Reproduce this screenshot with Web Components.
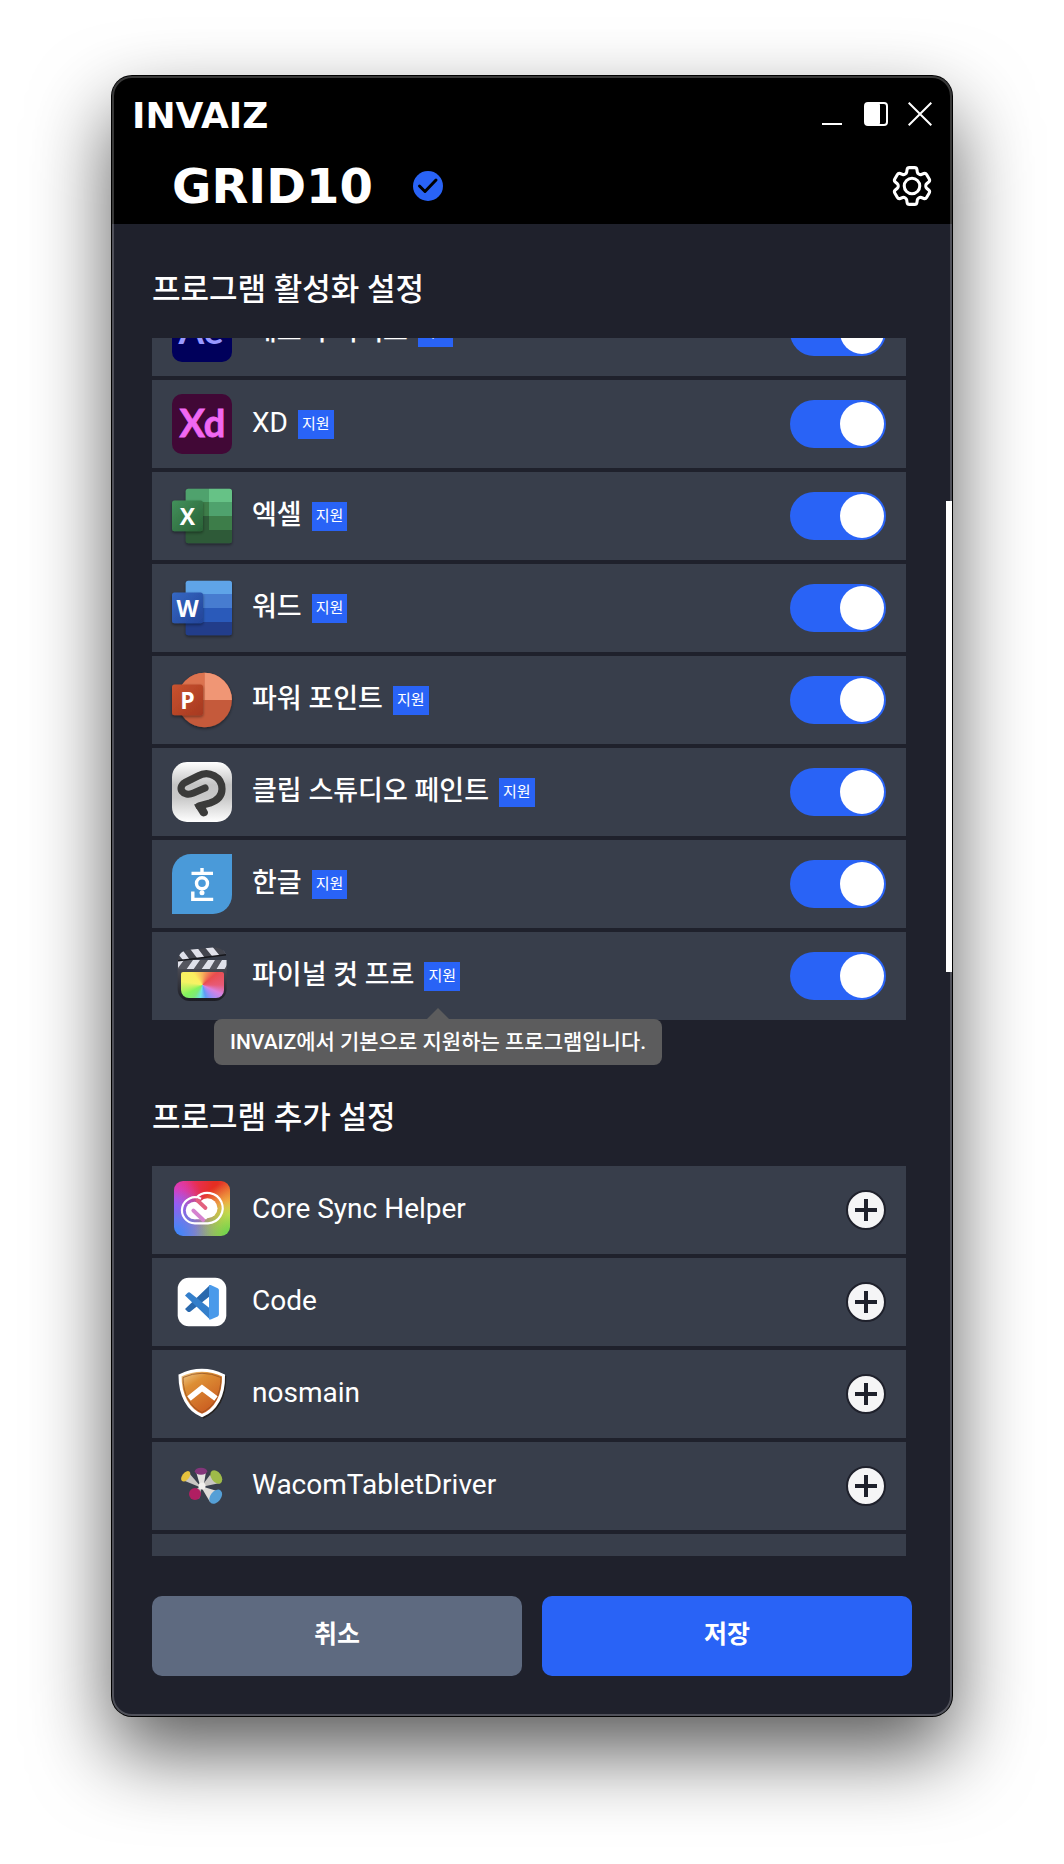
<!DOCTYPE html>
<html lang="ko">
<head>
<meta charset="utf-8">
<meta name="viewport" content="width=device-width, initial-scale=1">
<title>INVAIZ GRID10</title>
<style>
  body {
    margin: 0;
    background: #fff;
    color: #fff;
    font-family: Roboto, "Noto Sans CJK KR", sans-serif;
  }
</style>
</head>
<body>
<app-window>
  <window-header slot="header" brand="INVAIZ" device="GRID10"></window-header>

  <program-section heading="프로그램 활성화 설정" class="active">
    <program-row icon="ae" kind="toggle">애프터 이펙트</program-row>
    <program-row icon="xd" kind="toggle">XD</program-row>
    <program-row icon="excel" kind="toggle">엑셀</program-row>
    <program-row icon="word" kind="toggle">워드</program-row>
    <program-row icon="powerpoint" kind="toggle">파워 포인트</program-row>
    <program-row icon="clip" kind="toggle">클립 스튜디오 페인트</program-row>
    <program-row icon="hangul" kind="toggle">한글</program-row>
    <program-row icon="finalcut" kind="toggle">파이널 컷 프로</program-row>
    <hint-bubble slot="hint">INVAIZ에서 기본으로 지원하는 프로그램입니다.</hint-bubble>
  </program-section>

  <program-section heading="프로그램 추가 설정" class="extra">
    <program-row icon="cc" kind="add">Core Sync Helper</program-row>
    <program-row icon="code" kind="add">Code</program-row>
    <program-row icon="shield" kind="add">nosmain</program-row>
    <program-row icon="wacom" kind="add">WacomTabletDriver</program-row>
    <program-row kind="blank"></program-row>
  </program-section>

  <action-button slot="footer">취소</action-button>
  <action-button slot="footer" primary>저장</action-button>
</app-window>

<script>
const define = (name, html, setup) => {
  const template = document.createElement('template');
  template.innerHTML = html;
  customElements.define(name, class extends HTMLElement {
    constructor() {
      super();
      this.attachShadow({ mode: 'open' }).append(template.content.cloneNode(true));
    }
    connectedCallback() {
      if (setup) setup(this, this.shadowRoot);
    }
  });
};

/* Window frame */
define('app-window', `
<style>
  :host {
    display: block;
    position: relative;
    margin: 76px 112px 148px;
    border-radius: 20px;
    background: #1f212c;
    box-shadow: 0 0 0 1px #000, 0 36px 80px rgba(0, 0, 0, .65);
  }
  :host::after {
    content: "";
    position: absolute;
    inset: 0;
    border-radius: 20px;
    box-shadow: inset 0 0 0 2px rgba(255, 255, 255, .22);
    pointer-events: none;
  }
  main { display: flex; flex-direction: column; gap: 72px; padding: 40px 46px 40px 40px; }
  footer { display: flex; gap: 20px; padding: 0 40px 40px; }
  .thumb {
    position: absolute;
    z-index: 1;
    right: 0;
    top: 425px;
    width: 6px;
    height: 471px;
    background: #fff;
  }
</style>
<slot name="header"></slot>
<main><slot></slot></main>
<footer><slot name="footer"></slot></footer>
<div class="thumb"></div>`);

/* Title bar and device bar */
define('window-header', `
<style>
  :host {
    display: block;
    padding-bottom: 4px;
    border-radius: 20px 20px 0 0;
    background: #000;
    font-family: "DejaVu Sans", sans-serif;
    font-weight: 700;
  }
  svg { display: block; }
  button { padding: 0; border: 0; background: none; color: #fff; }
  .bar { display: flex; align-items: center; justify-content: space-between; padding: 0 20px; }
  .title { height: 76px; }
  .device { height: 68px; padding-left: 60px; }
  .brand { padding-top: 4px; font-size: 36px; line-height: 40px; }
  .controls { display: flex; gap: 20px; }
  .name { display: flex; align-items: center; gap: 29px; }
  h1 { margin: 0; min-width: 212px; font-size: 48px; line-height: 56px; }
</style>
<div class="bar title">
  <span class="brand"></span>
  <div class="controls">
    <button aria-label="최소화"><svg width="24" height="24"><rect x="2" y="21" width="20" height="2" fill="#fff"/></svg></button>
    <button aria-label="패널"><svg width="24" height="24"><rect x="1" y="1" width="22" height="22" rx="3" fill="none" stroke="#fff" stroke-width="2"/><rect x="1" y="1" width="15" height="22" rx="2" fill="#fff"/></svg></button>
    <button aria-label="닫기"><svg width="24" height="24"><path d="M.7.7l22.6 22.6M23.3.7L.7 23.3" stroke="#fff" stroke-width="2"/></svg></button>
  </div>
</div>
<div class="bar device">
  <div class="name">
    <h1></h1>
    <svg width="30" height="30"><circle cx="15" cy="15" r="15" fill="#2963f6"/><path d="M6.500 15l5.500 5.500L23 9" fill="none" stroke="#000" stroke-width="3" stroke-linecap="round" stroke-linejoin="round"/></svg>
  </div>
  <button aria-label="설정"><svg width="40" height="40" viewBox="2.2 2.200 19.600 19.600" fill="none" stroke="#fff" stroke-width="1.500" stroke-linejoin="round"><path d="M9.594 3.94c.09-.542.56-.94 1.11-.94h2.593c.55 0 1.02.398 1.11.94l.213 1.281c.063.374.313.686.645.87.074.04.147.083.22.127.325.196.72.257 1.075.124l1.217-.456a1.125 1.125 0 0 1 1.37.49l1.296 2.247a1.125 1.125 0 0 1-.26 1.431l-1.003.827c-.293.241-.438.613-.43.992a7.723 7.723 0 0 1 0 .255c-.008.378.137.75.43.991l1.004.827c.424.35.534.955.26 1.43l-1.298 2.247a1.125 1.125 0 0 1-1.369.491l-1.217-.456c-.355-.133-.75-.072-1.076.124a6.47 6.47 0 0 1-.22.128c-.331.183-.581.495-.644.869l-.213 1.281c-.09.543-.56.94-1.11.94h-2.594c-.55 0-1.019-.398-1.11-.94l-.213-1.281c-.062-.374-.312-.686-.644-.87a6.52 6.52 0 0 1-.22-.127c-.325-.196-.72-.257-1.076-.124l-1.217.456a1.125 1.125 0 0 1-1.369-.49l-1.297-2.247a1.125 1.125 0 0 1 .26-1.431l1.004-.827c.292-.24.437-.613.43-.991a6.932 6.932 0 0 1 0-.255c.007-.38-.138-.751-.43-.992l-1.004-.827a1.125 1.125 0 0 1-.26-1.43l1.297-2.247a1.125 1.125 0 0 1 1.37-.491l1.216.456c.356.133.751.072 1.076-.124.072-.044.146-.086.22-.128.332-.183.582-.495.644-.869l.214-1.28Z"/><circle cx="12" cy="12" r="3.800"/></svg></button>
</div>`, (host, root) => {
  root.querySelector('.brand').textContent = host.getAttribute('brand');
  root.querySelector('h1').textContent = host.getAttribute('device');
});

define('program-section', `
<style>
  :host { display: block; position: relative; }
  h2 { margin: 0 0 24px; padding-top: 2px; font-size: 31px; line-height: 48px; font-weight: 500; }
  .list { display: flex; flex-direction: column; gap: 4px; overflow: hidden; }
  :host(.active) .list { height: 682px; justify-content: flex-end; font-size: 27px; font-weight: 500; }
  :host(.active) .list ::slotted([icon="xd"]) { font-size: 28px; font-weight: 400; }
  :host(.extra) .list { height: 390px; font-size: 28px; }
  ::slotted(program-row) { flex: none; }
</style>
<h2></h2>
<div class="list"><slot></slot></div>
<slot name="hint"></slot>`, (host, root) => {
  root.querySelector('h2').textContent = host.getAttribute('heading');
});

/* One program */
define('program-row', `
<style>
  :host { display: flex; align-items: center; height: 88px; padding: 0 20px; box-sizing: border-box; background: #383e4b; }
  program-icon { margin-right: 20px; }
  label { flex: 1; display: flex; align-items: center; gap: 10px; }
  .text { line-height: 40px; padding-bottom: 2px; }
  .badge { padding: 0 4px; background: #2963f6; font-size: 15px; line-height: 29px; font-weight: 400; }
  input { appearance: none; display: flex; width: 96px; height: 48px; margin: 0; padding: 2px; box-sizing: border-box; border-radius: 24px; background: #5e6a80; }
  input::before { content: ""; width: 44px; height: 44px; border-radius: 50%; background: #fff; }
  input:checked { justify-content: flex-end; background: #2963f6; }
  button { padding: 0; border: 0; background: none; }
  svg { display: block; }
</style>
<program-icon></program-icon>
<label for="switch"><span class="text"><slot></slot></span><span class="badge">지원</span></label>
<input id="switch" type="checkbox" role="switch" checked>
<button aria-label="추가"><svg width="40" height="40"><circle cx="20" cy="20" r="19" fill="#f5f5f6" stroke="#1f212c" stroke-width="2"/><path d="M9 20h22M20 9v22" stroke="#1f212c" stroke-width="4"/></svg></button>`, (host, root) => {
  const kind = host.getAttribute('kind');
  root.querySelector('program-icon').setAttribute('name', host.getAttribute('icon') || '');
  if (kind === 'blank') root.querySelectorAll('label, input, button').forEach(node => node.remove());
  if (kind === 'add') {
    const text = root.querySelector('.text');
    text.style.flex = '1';
    root.querySelector('label').replaceWith(text);
    root.querySelector('input').remove();
  }
  if (kind === 'toggle') root.querySelector('button').remove();
});

/* Tooltip under the hovered badge */
define('hint-bubble', `
<style>
  :host {
    position: absolute;
    z-index: 1;
    left: 62px;
    bottom: -45px;
    padding: 0 16px;
    border-radius: 8px;
    background: #5c5c5d;
    font-size: 21px;
    line-height: 46px;
    font-weight: 500;
    white-space: nowrap;
  }
  :host::before {
    content: "";
    position: absolute;
    left: 50%;
    bottom: 100%;
    margin-left: -11px;
    border: 11px solid transparent;
    border-top: 0;
    border-bottom-color: #5c5c5d;
  }
</style>
<slot></slot>`, host => host.setAttribute('role', 'tooltip'));

define('action-button', `
<style>
  :host { display: block; flex: 1; }
  button {
    width: 100%;
    height: 80px;
    padding: 0 0 8px;
    border: 0;
    border-radius: 10px;
    background: #5e6a80;
    color: #fff;
    font: inherit;
    font-size: 25px;
    font-weight: 700;
  }
  :host([primary]) button { background: #2963f6; }
</style>
<button><slot></slot></button>`);

/* Program icons, drawn on a 60 x 60 grid */
const office = (id, dark, light, letter, back) => `
  <defs><linearGradient id="${id}" x2="1" y2="1"><stop stop-color="${light}"/><stop offset="1" stop-color="${dark}"/></linearGradient>
  <filter id="s" x="-30%" y="-30%" width="160%" height="160%"><feDropShadow dx="0" dy="1.500" stdDeviation="1.500" flood-opacity=".45"/></filter></defs>
  <g filter="url(#s)">${back}</g>
  <rect y="14.600" width="31" height="30.700" rx="2.500" fill="url(#${id})" filter="url(#s)"/>
  <text x="15.500" y="38.500" font-family="Open Sans, sans-serif" font-weight="700" font-size="23" text-anchor="middle" fill="#fff">${letter}</text>`;

const icons = {
  ae: `<rect width="60" height="60" rx="10" fill="#00005b"/><text x="29" y="42" font-family="Lato, sans-serif" font-weight="700" font-size="37" text-anchor="middle" fill="#9999ff">Ae</text>`,
  xd: `<rect width="60" height="60" rx="10" fill="#410836"/><text x="30.500" y="42.500" font-family="Lato, sans-serif" font-weight="700" font-size="38" text-anchor="middle" fill="#f168f2" stroke="#f168f2" stroke-width=".8">Xd</text>`,
  excel: office('x', '#2a6136', '#42915b', 'X', `<clipPath id="c"><rect x="13.700" y="2.700" width="46.300" height="54.600" rx="2.500"/></clipPath><g clip-path="url(#c)"><path fill="#50a26d" d="M13 2h24v14H13zM37 16h23v14H37z"/><path fill="#66c286" d="M37 2h23v14H37z"/><path fill="#3d7d4a" d="M13 16h24v14H13zM37 30h23v14H37z"/><path fill="#2e5a39" d="M13 30h24v14h23v14H13z"/></g>`),
  word: office('w', '#234498', '#3568c3', 'W', `<clipPath id="c"><rect x="13.700" y="2.700" width="46.300" height="54.600" rx="2.500"/></clipPath><g clip-path="url(#c)"><path fill="#5ea4e8" d="M13 2h47v14H13z"/><path fill="#467cd0" d="M13 16h47v14H13z"/><path fill="#2c5aba" d="M13 30h47v14H13z"/><path fill="#203d8a" d="M13 44h47v14H13z"/></g>`),
  powerpoint: office('p', '#a63820', '#c9532f', 'P', `<circle cx="32.600" cy="30" r="27.300" fill="#c55a3a"/><path fill="#dc7350" d="M32.600 2.700A27.300 27.300 0 0 0 5.300 30h27.300z"/><path fill="#f09675" d="M32.600 2.700A27.300 27.300 0 0 1 59.900 30H32.600z"/>`),
  clip: `<defs><linearGradient id="g" x2="0" y2="1"><stop stop-color="#fff"/><stop offset=".38" stop-color="#c4c4c4"/><stop offset=".6" stop-color="#c9c9c9"/><stop offset="1" stop-color="#fff"/></linearGradient></defs><rect width="60" height="60" rx="15" fill="url(#g)"/><path d="M33 26l-11.500 5C11 35.500 4.500 25.500 13 20.500L26 14C37 8 50 15 50 27c0 8-6 12-12 14l-11 3" fill="none" stroke="#3b3b3a" stroke-width="7.200" stroke-linecap="round" stroke-linejoin="round"/><path d="M22 42.500l9-2 5 9.500a4.300 4.300 0 0 1-7.500 3z" fill="#3b3b3a"/>`,
  hangul: `<path d="M19 0h41v41a19 19 0 0 1-19 19H0V19A19 19 0 0 1 19 0z" fill="#4a9ad9"/><g fill="none" stroke="#fff" stroke-width="3.400"><path d="M30 14v5M19.500 19.400h21.500M20.800 37.500v7.900h20.400"/><circle cx="30" cy="29.300" r="5.500"/></g><circle cx="30" cy="38.800" r="2.500" fill="#fff"/>`,
  finalcut: `<defs><linearGradient id="b" x2="0" y2="1"><stop stop-color="#55565f"/><stop offset="1" stop-color="#1c1d25"/></linearGradient>
    <clipPath id="t"><path d="M6 13c1-5 4-8 9-9l26-2.500c6-.5 11 2 13 7.500L6 16z"/></clipPath><clipPath id="u"><path d="M6 14h48.500v9H6z"/></clipPath></defs>
    <path d="M5.600 14h49v29a12 12 0 0 1-12 12h-25a12 12 0 0 1-12-12z" fill="url(#b)"/>
    <foreignObject x="8.700" y="25.700" width="43" height="26"><div style="height:26px;border-radius:2px 2px 8px 8px;background:conic-gradient(#f7b25a,#ea4d4f 50deg,#e85a76 90deg,#d982e0 115deg,#a08df5 140deg,#5d9cf5 165deg,#6be6e8 190deg,#7de87b 215deg,#83f35e 240deg,#f5f264 280deg,#fbee5f 320deg,#f7b25a)"></div></foreignObject>
    <g clip-path="url(#t)"><path d="M0 0h60v20H0z" fill="#43454e"/><path d="M2 3l9 11h7L9 2zM16 0l9 12h8L24 0zM31-1l9 11h8L39-1zM46-2l9 11h8L54-2z" fill="#e0e1ea"/></g>
    <g clip-path="url(#u)"><path d="M0 14h60v10H0z" fill="#55565f"/><path d="M21 14h7l-7 10h-7zM36 14h7l-6 10h-8zM50 14h8l-6 10h-8zM6 14h6l-6 8z" fill="#e0e1ea"/></g>
    <path d="M6 14.800l48-6" stroke="#16171c" stroke-width="1.500"/>`,
  cc: `<foreignObject x="2" y="1" width="56" height="55"><div style="height:55px;border-radius:9px;background:radial-gradient(circle at 100% 100%,#5fd94f,transparent 45%),radial-gradient(circle at 0 100%,#3f86fb 5%,transparent 60%),radial-gradient(circle at 100% 62%,#f3e04e,transparent 50%),radial-gradient(circle at 0 45%,#c147f7,transparent 50%),radial-gradient(circle at 0 0,#ee2f92,transparent 50%),radial-gradient(circle at 55% 0,#e52e22 20%,transparent 75%),linear-gradient(90deg,#c070c0,#f29a36)"></div></foreignObject>
    <path d="M23 43.300A13 13 0 1 1 29 18.800M24.500 17.600A15.200 15.200 0 1 1 36 43.300H23" fill="none" stroke="#fff" stroke-width="2.200"/>
    <circle cx="22.500" cy="30.500" r="8.700" fill="#fff"/><circle cx="35.500" cy="28.300" r="10" fill="#fff"/><path d="M22.500 39.200h12l2-4-12-11-6 8z" fill="#fff"/>
    <path d="M21.300 30.500l10 9.500" stroke="#d582cf" stroke-width="3.800" stroke-linecap="round"/><path d="M25.500 20.500l8 7.500" stroke="#e2607e" stroke-width="3.800" stroke-linecap="round"/>`,
  code: `<rect x="5.700" y="5.700" width="48.600" height="48.600" rx="11" fill="#fff"/><path d="M13 37l2.500 2.500c1 .8 2 .8 3 0L38 24V13z" fill="#2a69ad"/><path d="M13 23.500l2.500-2.600c1-.8 2-.8 3 0L38 36.500V47.500z" fill="#347fcb"/><path d="M37 13.500c.4-.6 1-.7 1.700-.4l7 3.200c.8.400 1.200 1 1.200 1.800v24.500c0 .8-.4 1.400-1.200 1.800l-7 3c-.7.300-1.300.2-1.700-.4z" fill="#4a9aea"/>`,
  shield: `<defs><linearGradient id="o" x2=".6" y2="1"><stop stop-color="#f3d7a0"/><stop offset=".35" stop-color="#dd8f35"/><stop offset="1" stop-color="#c9591f"/></linearGradient></defs><path d="M31 54C44 48 54 35 53.500 12" fill="none" stroke="#262220" stroke-width="1.500"/><path d="M8 11.500Q30 1 51.500 11.500C52 31 44 46 30 51.500 16 46 8 31 8 11.500z" fill="url(#o)" stroke="#fff" stroke-width="3"/><path d="M11 13.500Q30 5 49 13.500C49 30 42 43 30 48.500 18 43 11 30 11 13.500z" fill="none" stroke="#8a491e" stroke-width=".7"/><path d="M17 34.500L30 24l14 10.500" fill="none" stroke="#fff" stroke-width="5.500"/>`,
  wacom: `<g fill="#c9c6c3"><path d="M30 32L10.500 24l6-7.500z"/><path d="M28.500 31L24 15.500h10L31.500 31z" fill="#e4e2df"/><path d="M29 31l9-12 10 8z"/><path d="M30 29l-11 8 8 6z"/><path d="M28.500 30L38 46l10.500-10z" fill="#dddbd8"/></g><circle cx="30" cy="30" r="3.500" fill="#f1efed"/><ellipse cx="13.700" cy="20.300" rx="3.500" ry="6" transform="rotate(38 13.700 20.300)" fill="#e6c23d"/><ellipse cx="29" cy="15.300" rx="6.200" ry="3.500" fill="#83357a"/><ellipse cx="44.300" cy="21" rx="5" ry="7.500" transform="rotate(-35 44.300 21)" fill="#9fba49"/><ellipse cx="23" cy="38" rx="6" ry="6" fill="#b01f62"/><ellipse cx="43.700" cy="40.700" rx="5.300" ry="8" transform="rotate(38 43.700 40.700)" fill="#559fd6"/>`
};

define('program-icon', `
<style>
  :host { display: block; flex: none; width: 60px; height: 60px; }
  svg { display: block; overflow: visible; }
</style>
<svg width="60" height="60" viewBox="0 0 60 60" aria-hidden="true"></svg>`, (host, root) => {
  root.querySelector('svg').innerHTML = icons[host.getAttribute('name')] || '';
});
</script>
</body>
</html>
